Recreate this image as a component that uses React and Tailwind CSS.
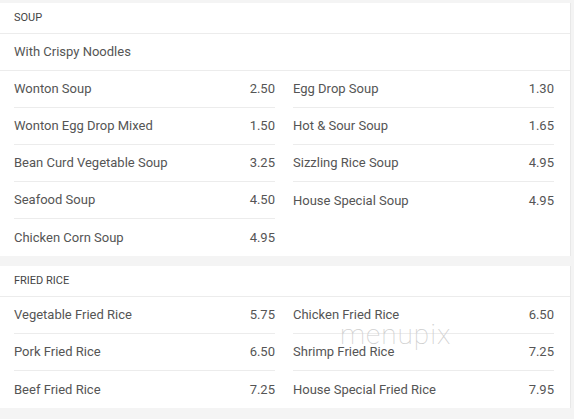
import React from "react";

const soup = [
  ["Wonton Soup", "2.50"],
  ["Egg Drop Soup", "1.30"],
  ["Wonton Egg Drop Mixed", "1.50"],
  ["Hot & Sour Soup", "1.65"],
  ["Bean Curd Vegetable Soup", "3.25"],
  ["Sizzling Rice Soup", "4.95"],
  ["Seafood Soup", "4.50"],
  ["House Special Soup", "4.95"],
  ["Chicken Corn Soup", "4.95"],
];

const rice = [
  ["Vegetable Fried Rice", "5.75"],
  ["Chicken Fried Rice", "6.50"],
  ["Pork Fried Rice", "6.50"],
  ["Shrimp Fried Rice", "7.25"],
  ["Beef Fried Rice", "7.25"],
  ["House Special Fried Rice", "7.95"],
];

function Column({ items }) {
  return (
    <div className="flex flex-col">
      {items.map(([name, price], i) => (
        <div
          key={name}
          className={
            "flex h-[37px] items-center justify-between " +
            (i < items.length - 1 ? "border-b border-[#ececec]" : "")
          }
        >
          <span>{name}</span>
          <span>{price}</span>
        </div>
      ))}
    </div>
  );
}

function Section({ title, note, items }) {
  const left = items.filter((_, i) => i % 2 === 0);
  const right = items.filter((_, i) => i % 2 === 1);
  return (
    <div className="bg-white border-r border-[#e8e8e8] w-[571px]">
      <div className="h-[31px] flex items-center pt-[1px] px-[14px] text-[11px] text-[#444] border-b border-[#ececec]">
        {title}
      </div>
      {note && (
        <div className="h-[37px] flex items-center px-[14px] border-b border-[#ececec] text-[#555]">
          {note}
        </div>
      )}
      <div className="grid grid-cols-[261px_261px] gap-x-[18px] px-[14px] text-[#555]">
        <Column items={left} />
        <Column items={right} />
      </div>
    </div>
  );
}

export default function App() {
  return (
    <div
      className="relative w-[574px] h-[419px] bg-[#f4f4f4] pt-[3px] text-[13px] overflow-hidden"
      style={{ fontFamily: "Roboto, 'Liberation Sans', Arial, sans-serif" }}
    >
      <Section title="SOUP" note="With Crispy Noodles" items={soup} />
      <div className="h-[10px]" />
      <Section title="FRIED RICE" items={rice} />
      <div className="absolute left-[340px] top-[321px] text-[28px] font-thin text-[#cfcfcf] leading-none tracking-[1px] pointer-events-none">
        menupix
      </div>
    </div>
  );
}
